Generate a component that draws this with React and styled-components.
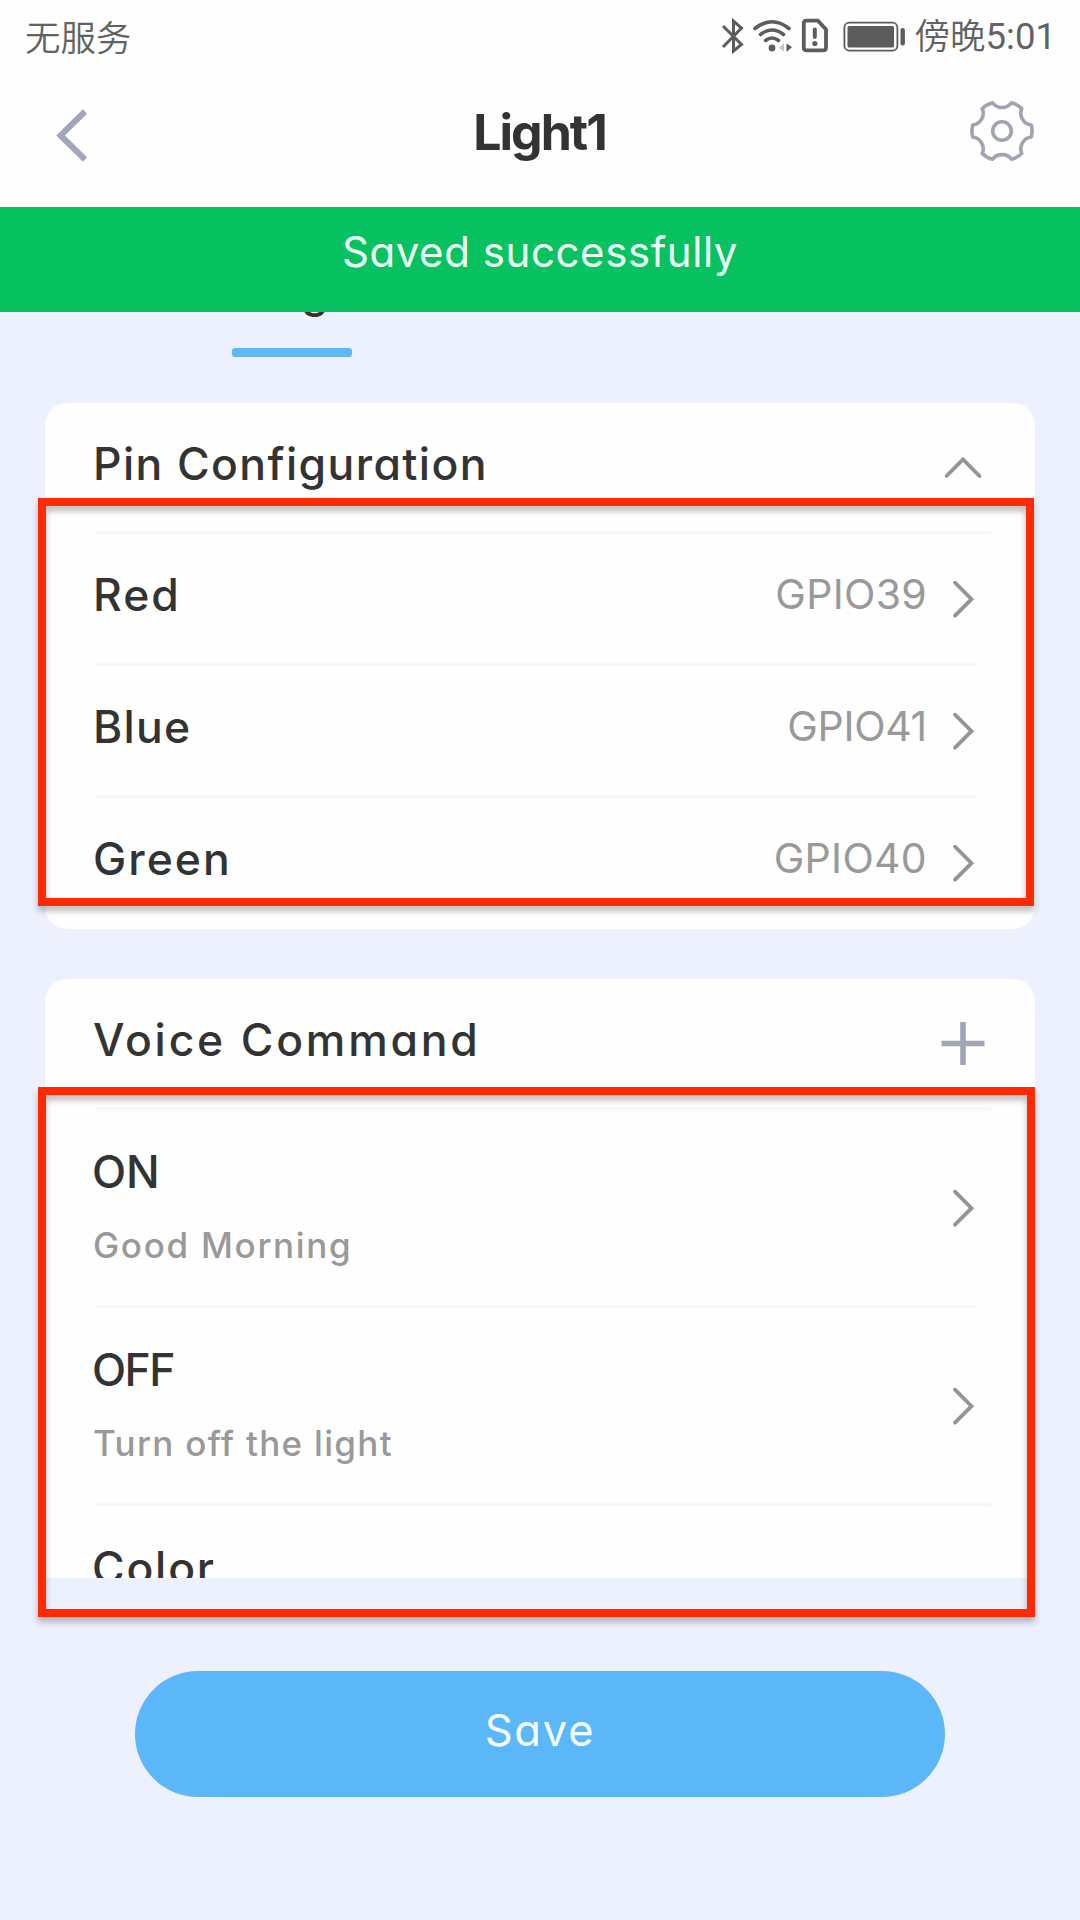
import React from 'react';
import styled, { createGlobalStyle } from 'styled-components';

const GlobalStyle = createGlobalStyle`
  * { box-sizing: border-box; }
  html, body { margin: 0; padding: 0; background: #edf1fe; }
  body { font-family: Inter, "Noto Sans CJK SC", sans-serif; font-feature-settings: "cv11"; }
`;

const Screen = styled.div`
  position: relative;
  width: 1080px;
  height: 1920px;
  overflow: hidden;
  background: #edf1fe;
  display: flex;
  flex-direction: column;
`;

const StatusBar = styled.div`
  height: 70px;
  flex: none;
  background: #fefefe;
  display: flex;
  justify-content: space-between;
  align-items: center;
  padding: 4px 24px 0 25px;
  color: #626262;
  font-family: Roboto, "Noto Sans CJK SC", sans-serif;
  font-size: 35.5px;
  font-weight: 400;
  line-height: 60px;
`;

const Carrier = styled.span`
  font-family: "Noto Sans CJK SC", sans-serif;
  font-weight: 350;
  padding-bottom: 2px;
`;

const StatusIcons = styled.div`
  display: flex;
  align-items: center;
`;

const Clock = styled.span`
  margin-left: 9px;
  font-weight: 350;
  white-space: nowrap;
`;

const Digits = styled.span`
  font-size: 36.5px;
  font-weight: 400;
`;

const Header = styled.header`
  height: 137px;
  flex: none;
  background: #fefefe;
  padding: 0 45px 15px 56px;
  display: grid;
  grid-template-columns: 66px 1fr 66px;
  align-items: center;
`;

const Title = styled.h1`
  margin: 0;
  text-align: center;
  font-size: 50px;
  font-weight: 650;
  letter-spacing: -2px;
  line-height: 60px;
  color: #333;
  padding: 2px 12px 0 0;
`;

const Toast = styled.div`
  position: absolute;
  z-index: 2;
  top: 207px;
  left: 0;
  width: 1080px;
  height: 105px;
  background: #08c261;
  color: #ecfff5;
  font-size: 42px;
  line-height: 90px;
  text-align: center;
  letter-spacing: ${(p) => p.$spacing}px;
`;

const ScrollArea = styled.main`
  height: 1371px;
  flex: none;
  overflow: hidden;
  padding: 0 45px;
  display: flex;
  flex-direction: column;
`;

const TabBar = styled.nav`
  height: 150px;
  flex: none;
  padding-left: 97px;
  display: flex;
  align-items: flex-end;
`;

const Tab = styled.div`
  width: 300px;
  display: flex;
  flex-direction: column;
  align-items: center;
  gap: 31px;
  font-size: 43px;
  font-weight: 500;
  line-height: 50px;
  letter-spacing: 2px;
  color: #333;
  &::after {
    content: '';
    width: 120px;
    height: 9px;
    border-radius: 3px;
    background: #5fb7f3;
  }
`;

const Card = styled.section`
  flex: none;
  height: ${(p) => p.$height}px;
  margin-top: ${(p) => p.$gap}px;
  border-radius: 22px;
  background: #fefefe;
  padding-left: 51px;
`;

const CardHead = styled.div`
  height: 128px;
  display: flex;
  align-items: center;
  justify-content: space-between;
  padding-right: 50px;
`;

const Label = styled.span`
  font-size: 44.5px;
  font-weight: 500;
  line-height: 58px;
  color: #333;
  padding-bottom: 7px;
  white-space: nowrap;
  margin-left: ${(p) => p.$shift || 0}px;
  letter-spacing: ${(p) => p.$spacing || 0}px;
`;

const Row = styled.div`
  height: ${(p) => p.$height}px;
  width: ${(p) => p.$line}px;
  border-top: 3px solid #f6f5f7;
  display: flex;
  align-items: center;
`;

const Value = styled.span`
  margin-left: auto;
  font-size: 41px;
  font-weight: 400;
  line-height: 60px;
  padding-bottom: 9px;
  color: #999;
  letter-spacing: ${(p) => p.$spacing || 0}px;
`;

const ChevronBox = styled.span`
  flex: none;
  width: 24px;
  height: 40px;
  margin-left: ${(p) => p.$gap};
  margin-right: ${(p) => p.$edge}px;
  svg { display: block; }
`;

const CommandText = styled.div`
  display: flex;
  flex-direction: column;
`;

const Phrase = styled.span`
  font-size: 35px;
  font-weight: 500;
  line-height: 50px;
  margin: 12px 0 3px -3px;
  color: #999;
  white-space: nowrap;
  letter-spacing: ${(p) => p.$spacing || 0}px;
`;

const Footer = styled.footer`
  padding-top: 93px;
  display: flex;
  justify-content: center;
`;

const SaveButton = styled.button`
  width: 810px;
  height: 126px;
  border: 0;
  border-radius: 63px;
  background: #5cb7f8;
  color: #f3fcff;
  font-family: inherit;
  font-feature-settings: inherit;
  font-size: 43.5px;
  font-weight: 400;
  letter-spacing: 1.8px;
  padding: 0 0 9px;
`;

const Highlight = styled.div`
  position: absolute;
  z-index: 1;
  left: 38px;
  top: ${(p) => p.$top}px;
  width: ${(p) => p.$width}px;
  height: ${(p) => p.$height}px;
  border: 8px solid #ff2a04;
  filter: drop-shadow(0 5px 3px rgba(0, 0, 0, 0.27));
  pointer-events: none;
`;

const BackIcon = () => (
  <svg width="34" height="62" viewBox="0 0 34 62" fill="none" stroke="#a2a6b8" strokeWidth="6">
    <path d="M29 12 L4.5 36 L29 60" transform="translate(0 -0.5)" />
  </svg>
);

const gearPath = () => {
  const turn = (x, y, k) => {
    const a = (k * Math.PI) / 3;
    return `${(x * Math.cos(a) - y * Math.sin(a)).toFixed(2)} ${(x * Math.sin(a) + y * Math.cos(a)).toFixed(2)}`;
  };
  let d = `M${turn(-9.5, -28.3, 0)}`;
  for (let k = 0; k < 6; k += 1) {
    d += ` C${turn(-5, -22, k)} ${turn(5, -22, k)} ${turn(9.5, -28.3, k)}`;
    d += ` Q${turn(15, -27, k)} ${turn(-9.5, -28.3, k + 1)}`;
  }
  return `${d} Z`;
};

const GearIcon = () => (
  <svg width="66" height="66" viewBox="-33 -33 66 66" fill="none" stroke="#a0a4b0" strokeWidth="3.6" strokeLinejoin="round">
    <path d={gearPath()} />
    <circle r="9.3" />
  </svg>
);

const StatusGlyphs = () => (
  <svg width="186" height="40" viewBox="720 17 186 40" fill="none" stroke="#5c5c5c">
    <path d="M723 26 L741.5 44.5 L733.5 51 V21 L741.5 28 L723 47" strokeWidth="3" strokeLinejoin="miter" />
    <g strokeWidth="3.6" strokeLinecap="round">
      <path d="M755 28.5 Q772 15 789 28.5" />
      <path d="M760.5 34.5 Q772 25.5 783.5 34.5" />
      <path d="M765.5 40.5 Q772 35.5 778.5 40.5" />
    </g>
    <circle cx="772" cy="48" r="3.4" fill="#5c5c5c" stroke="none" />
    <path d="M784 43 V51.5 L779 48 Z" fill="#c4c4c4" stroke="none" />
    <path d="M786.5 43.5 L792 47 L786.5 52 Z" fill="#5c5c5c" stroke="none" />
    <path d="M806.5 20.7 H818 L826 29.5 V47.5 Q826 50.3 823.2 50.3 H806.6 Q803.8 50.3 803.8 47.5 V23.4 Q803.8 20.7 806.5 20.7 Z" strokeWidth="3.8" strokeLinejoin="round" />
    <path d="M814.8 29.5 V37" strokeWidth="4" strokeLinecap="round" />
    <circle cx="814.8" cy="43.5" r="2.6" fill="#5c5c5c" stroke="none" />
    <rect x="844.4" y="22.7" width="53" height="28" rx="5" strokeWidth="1.8" />
    <rect x="847.5" y="26" width="46.5" height="21.5" rx="1.5" fill="#5c5c5c" stroke="none" />
    <rect x="900.5" y="28" width="4.4" height="17.5" rx="2" fill="#5c5c5c" stroke="none" />
  </svg>
);

const Chevron = ({ edge, gap = '24px' }) => (
  <ChevronBox $edge={edge} $gap={gap}>
    <svg width="24" height="40" viewBox="0 0 24 40" fill="none" stroke="#949494" strokeWidth="3.8" strokeLinecap="round">
      <path d="M4 3.7 L20.5 20.2 L4 36.7" />
    </svg>
  </ChevronBox>
);

const CollapseIcon = () => (
  <svg width="44" height="44" viewBox="0 0 44 44" fill="none" stroke="#949494" strokeWidth="3.8" strokeLinecap="round">
    <path d="M5.5 31 L22 14.5 L38.5 31" />
  </svg>
);

const PlusIcon = () => (
  <svg width="44" height="44" viewBox="0 0 44 44" fill="none" stroke="#a0a6b5" strokeWidth="5.6">
    <path d="M0.5 22.5 H43.5 M22 1 V44" />
  </svg>
);

const pins = [
  { name: 'Red', value: 'GPIO39', line: 895, edge: 16, spacing: 2, valueSpacing: 0.3 },
  { name: 'Blue', value: 'GPIO41', line: 881, edge: 2, spacing: 1.3, valueSpacing: -0.3 },
  { name: 'Green', value: 'GPIO40', line: 881, edge: 2, spacing: 2, valueSpacing: 0.3 },
];

const commands = [
  { name: 'ON', phrase: 'Good Morning', line: 895, edge: 16, spacing: 0, phraseSpacing: 1.7 },
  { name: 'OFF', phrase: 'Turn off the light', line: 881, edge: 2, spacing: -1.6, phraseSpacing: 1.3 },
  { name: 'Color', phrase: '\u00a0', line: 895, edge: 16, spacing: 1.8, phraseSpacing: 0 },
];

export default function App() {
  return (
    <Screen>
      <GlobalStyle />
      <StatusBar>
        <Carrier>无服务</Carrier>
        <StatusIcons>
          <StatusGlyphs />
          <Clock>傍晚<Digits>5:01</Digits></Clock>
        </StatusIcons>
      </StatusBar>
      <Header>
        <BackIcon />
        <Title>Light1</Title>
        <GearIcon />
      </Header>
      <Toast $spacing={0.57}>Saved successfully</Toast>
      <ScrollArea>
        <TabBar>
          <Tab>Configure</Tab>
        </TabBar>
        <Card $height={526} $gap={46}>
          <CardHead>
            <Label $spacing={1.4} $shift={-3}>Pin Configuration</Label>
            <CollapseIcon />
          </CardHead>
          {pins.map((p) => (
            <Row key={p.name} $height={132} $line={p.line}>
              <Label $spacing={p.spacing} $shift={-3}>{p.name}</Label>
              <Value $spacing={p.valueSpacing}>{p.value}</Value>
              <Chevron edge={p.edge} />
            </Row>
          ))}
        </Card>
        <Card $height={722} $gap={50}>
          <CardHead>
            <Label $spacing={2.8} $shift={-3}>Voice Command</Label>
            <PlusIcon />
          </CardHead>
          {commands.map((c) => (
            <Row key={c.name} $height={198} $line={c.line}>
              <CommandText>
                <Label $spacing={c.spacing} $shift={-4}>{c.name}</Label>
                <Phrase $spacing={c.phraseSpacing}>{c.phrase}</Phrase>
              </CommandText>
              <Chevron edge={c.edge} gap="auto" />
            </Row>
          ))}
        </Card>
      </ScrollArea>
      <Footer>
        <SaveButton>Save</SaveButton>
      </Footer>
      <Highlight $top={498} $width={996} $height={408} />
      <Highlight $top={1087} $width={997} $height={530} />
    </Screen>
  );
}
